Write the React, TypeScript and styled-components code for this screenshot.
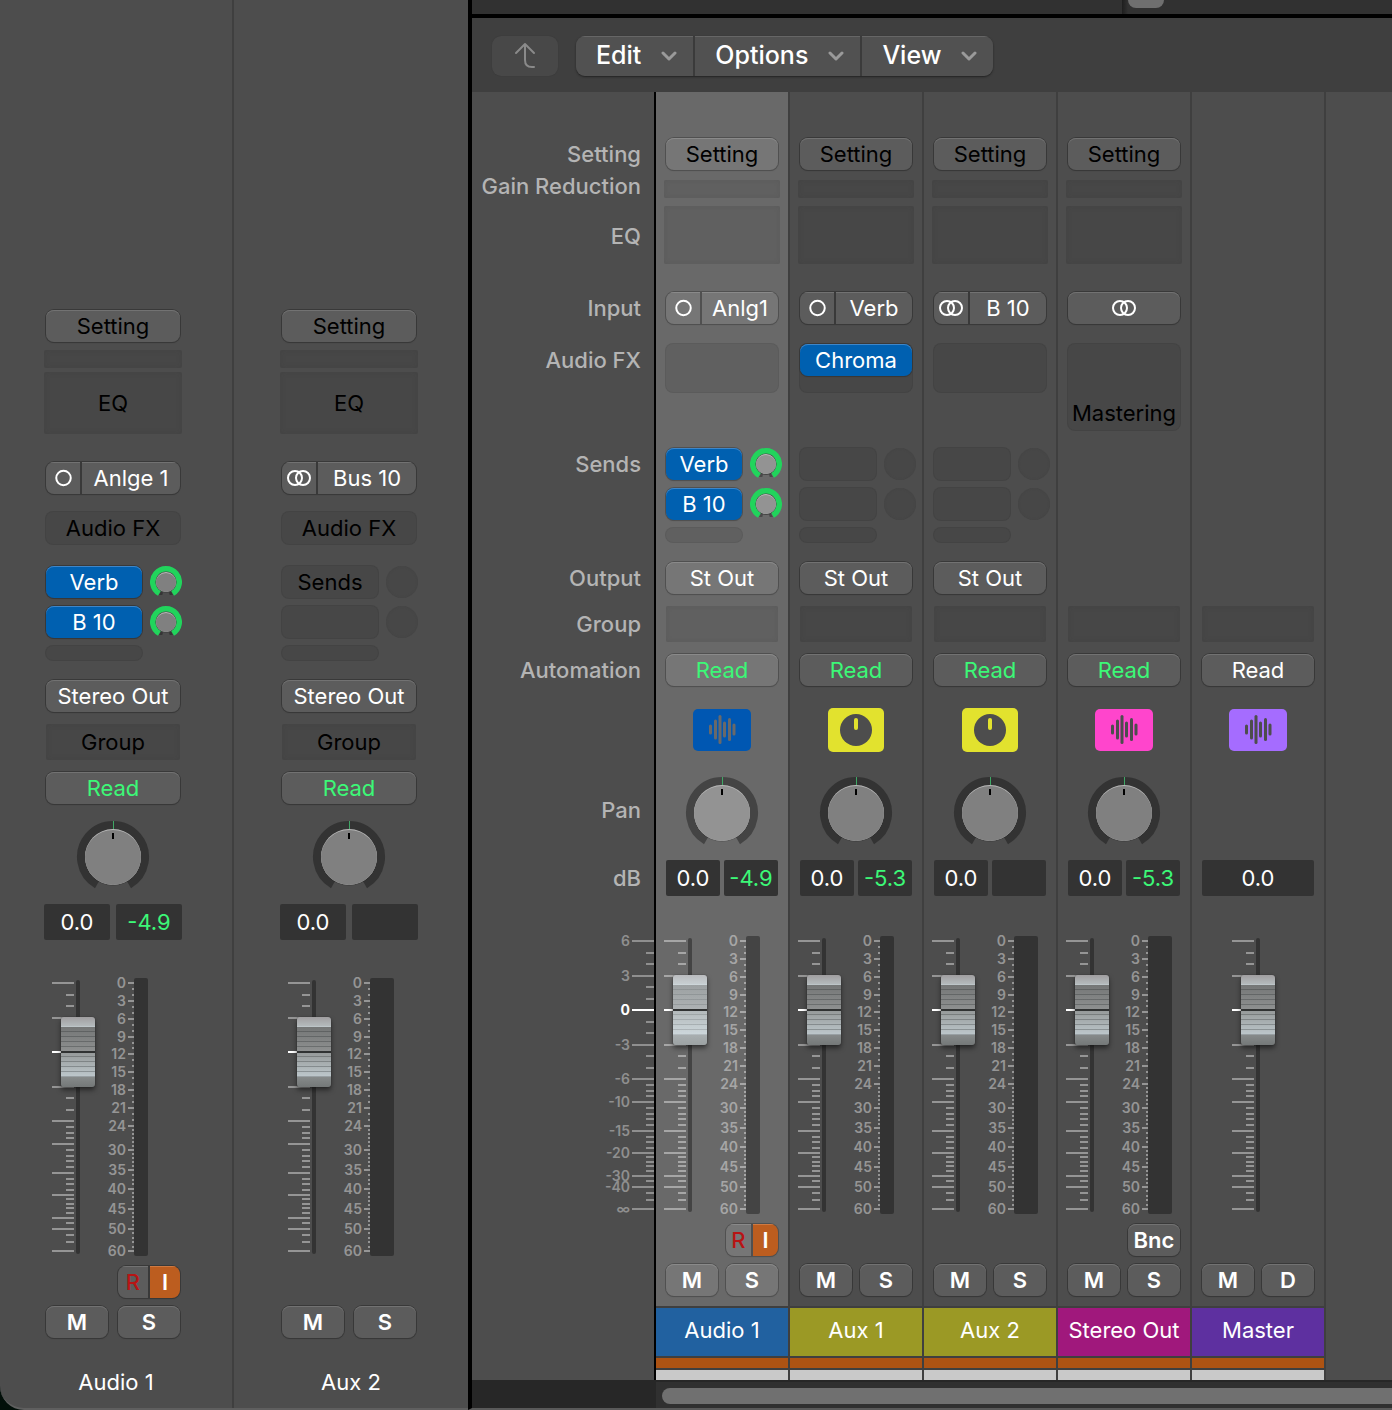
import React from "react";
import styled, { createGlobalStyle, css } from "styled-components";

const GlobalStyle = createGlobalStyle`
  *, *::before, *::after { box-sizing: border-box; }
  body { margin: 0; background: #020f09; }
  body, button, input { font-family: Inter, "Liberation Sans", sans-serif; }
`;

/* ---------- shared row tracks ---------- */

const mixerRows = css`
  grid-template-rows:
    [setting] 42px [gain] 26px [eq] 86px [input] 52px [fx] 104px [sends] 114px
    [output] 44px [group] 48px [automation] 54px [icon] 68px [pan] 84px [db] 76px
    [fader] 288px [rec] 40px [mute] 42px;
`;

const inspectorRows = css`
  grid-template-rows:
    [setting] 40px [gain] 22px [eq] 90px [input] 50px [fx] 54px [sends] 114px
    [output] 44px [group] 48px [automation] 48px [pan] 84px [db] 74px
    [fader] 288px [rec] 40px [mute] 60px;
`;

/* ---------- window ---------- */

const Window = styled.div`
  display: flex;
  min-height: 100vh;
  color: #fff;
  font-size: 22px;
`;

const Inspector = styled.section`
  display: flex;
  flex: none;
  width: 468px;
  background: #4d4d4d;
  border-bottom: 2px solid #5f5f5f;
  border-bottom-left-radius: 24px;
  overflow: hidden;
`;

const InspectorStrip = styled.article`
  --face: #5c5c5c;
  --edge: #727272;
  --shade: #393939;
  --slot: #474747;
  --slot-edge: #434343;
  --ring: #333;
  --knob: #808080;
  --tick: #959595;
  --ground: #4d4d4d;
  --gloss: rgba(255, 255, 255, 0);
  --pad-slot: 0;
  --pad-button: 0 2px;
  --pad-send: 0 0 0 2px;
  --pad-db: 0;
  --gap-db: 6px;
  --gap-mute: 10px;
  --inset: 44px;
  flex: 1;
  display: flex;
  flex-direction: column;
  justify-content: flex-end;
  padding-bottom: 10px;
  & + & {
    --inset: 46px;
    border-left: 2px solid #3f3f3f;
    flex: none;
    width: 236px;
  }
`;

const InspectorGrid = styled.div`
  display: grid;
  grid-template-columns: 138px;
  ${inspectorRows}
  padding-left: var(--inset);
`;

const InspectorName = styled.div`
  line-height: 32px;
  text-align: center;
`;

const Mixer = styled.main`
  flex: 1;
  min-width: 0;
  display: flex;
  flex-direction: column;
  border-left: 4px solid #000;
  border-bottom: 2px solid #5a5a5a;
  background: #4d4d4d;
  overflow: hidden;
`;

const UpperPane = styled.div`
  display: flex;
  justify-content: flex-end;
  height: 18px;
  background: #313131;
  border-bottom: 4px solid #000;
`;

const UpperScroll = styled.div`
  width: 270px;
  padding-left: 6px;
  background: linear-gradient(to right, #1e1e1e, #313131 6px);
`;

const UpperThumb = styled.div`
  width: 36px;
  height: 8px;
  border-radius: 0 0 8px 8px;
  background: #6f6f6f;
`;

const Toolbar = styled.header`
  display: flex;
  align-items: center;
  gap: 18px;
  height: 74px;
  padding: 2px 20px 0;
  background: #3f3f3f;
`;

const BackButton = styled.button`
  display: grid;
  place-items: center;
  width: 66px;
  height: 40px;
  padding: 0;
  border: 0;
  border-radius: 9px;
  background: #484848;
  box-shadow: 0 0 1px #353535;
  color: #8a8a8a;
`;

const MenuBar = styled.nav`
  display: flex;
  gap: 2px;
  height: 40px;
  border-radius: 9px;
  overflow: hidden;
  background: #3b3b3b;
  box-shadow: 0 1px 2px #222;
`;

const MenuButton = styled.button`
  display: flex;
  align-items: center;
  gap: 20px;
  padding: 0 16px 2px 20px;
  border: 0;
  background: #515151;
  box-shadow: inset 0 1px #666;
  color: #fff;
  font-size: 25px;
  font-weight: 500;
`;

const Body = styled.div`
  display: flex;
  flex: 1;
`;

const LabelColumn = styled.div`
  display: grid;
  ${mixerRows}
  align-content: start;
  flex: none;
  width: 184px;
  padding-top: 46px;
  border-right: 2px solid #000;
  color: #b4b4b4;
  --tick: #8f8f8f;
`;

const RowLabel = styled.div<{ $row: string; $line: number }>`
  grid-row: ${(p) => p.$row};
  padding-right: 13px;
  line-height: ${(p) => p.$line}px;
  font-weight: 500;
  text-align: right;
  white-space: nowrap;
`;

const ChannelStrip = styled.article<{ $selected?: boolean }>`
  --face: ${(p) => (p.$selected ? "#767676" : "#5c5c5c")};
  --edge: ${(p) => (p.$selected ? "#8a8a8a" : "#727272")};
  --shade: ${(p) => (p.$selected ? "#505050" : "#393939")};
  --slot: ${(p) => (p.$selected ? "#606060" : "#474747")};
  --slot-edge: ${(p) => (p.$selected ? "#5b5b5b" : "#434343")};
  --ring: ${(p) => (p.$selected ? "#444" : "#333")};
  --knob: ${(p) => (p.$selected ? "#939393" : "#808080")};
  --tick: ${(p) => (p.$selected ? "#a6a6a6" : "#959595")};
  --ground: ${(p) => (p.$selected ? "#696969" : "#4d4d4d")};
  --gloss: ${(p) => (p.$selected ? "rgba(240,250,255,0.32)" : "rgba(255,255,255,0)")};
  --pad-slot: 0 8px;
  --pad-button: 0 10px;
  --pad-send: 0 6px 0 10px;
  --pad-db: 0 10px;
  --gap-db: 4px;
  --gap-mute: 8px;
  flex: none;
  display: flex;
  flex-direction: column;
  width: 134px;
  border-right: 2px solid #3f3f3f;
  background: var(--ground);
`;

const ChannelGrid = styled.div`
  display: grid;
  grid-template-columns: minmax(0, 1fr);
  ${mixerRows}
  padding-top: 46px;
`;

const ChannelName = styled.div<{ $color: string }>`
  height: 50px;
  border-top: 2px solid #3f3f3f;
  background: ${(p) => p.$color};
  line-height: 44px;
  text-align: center;
  white-space: nowrap;
`;

const ColorBand = styled.div<{ $color: string }>`
  height: 12px;
  border-top: 2px solid #3f3f3f;
  background: ${(p) => p.$color};
`;

const ScrollFooter = styled.footer`
  display: flex;
  height: 28px;
  background: #272727;
`;

const ScrollTrack = styled.div`
  flex: 1;
  margin-left: 184px;
  padding: 6px 0 4px 6px;
  border-top: 2px solid #272727;
  background: #303030;
`;

const ScrollThumb = styled.div`
  height: 16px;
  border-radius: 8px 0 0 8px;
  background: #707070;
`;

/* ---------- strip parts ---------- */

type Pad = "slot" | "button" | "send" | "db";

const Cell = styled.div<{ $row: string; $pad?: Pad }>`
  grid-row: ${(p) => p.$row};
  padding: var(--pad-${(p) => p.$pad ?? "button"});
`;

const Slot = styled.div<{ $height: number; $round?: boolean; $bottom?: boolean }>`
  display: flex;
  align-items: ${(p) => (p.$bottom ? "flex-end" : "center")};
  justify-content: center;
  height: ${(p) => p.$height}px;
  padding-bottom: ${(p) => (p.$bottom ? 4 : 0)}px;
  border-radius: ${(p) => (p.$round ? 7 : 2)}px;
  background: var(--slot);
  box-shadow: ${(p) => (p.$round ? "0 0 0 1px var(--slot-edge)" : "inset 0 0 5px var(--slot-edge)")};
  color: #000;
  white-space: nowrap;
`;

const FxSlot = styled.div`
  height: 48px;
  border-radius: 7px;
  background: var(--slot);
  box-shadow: 0 0 0 1px var(--slot-edge);
`;

const Button = styled.button<{ $ink?: string; $fill?: string; $strong?: boolean }>`
  display: flex;
  align-items: center;
  justify-content: center;
  width: 100%;
  height: 32px;
  padding: 0;
  border: 0;
  border-radius: 8px;
  background: ${(p) => p.$fill ?? "var(--face)"};
  color: ${(p) => p.$ink ?? "#fff"};
  font-size: 22px;
  font-weight: ${(p) => (p.$strong ? 600 : 400)};
  white-space: nowrap;
  box-shadow: inset 0 1px ${(p) => (p.$fill ? "#3f86c8" : "var(--edge)")}, 0 1px 1px var(--shade), 0 0 0 1px var(--shade);
`;

const SplitButton = styled.div<{ $columns: string }>`
  display: grid;
  grid-template-columns: ${(p) => p.$columns};
  gap: 2px;
  height: 32px;
  border-radius: 8px;
  overflow: hidden;
  background: var(--shade);
  box-shadow: 0 0 0 1px var(--shade), 0 1px 1px var(--shade);
`;

const SplitPart = styled.button<{ $ink?: string; $fill?: string; $weight?: number }>`
  display: flex;
  align-items: center;
  justify-content: center;
  min-width: 0;
  padding: 0;
  border: 0;
  background: ${(p) => p.$fill ?? "var(--face)"};
  box-shadow: inset 0 1px ${(p) => (p.$fill ? "#cf7a42" : "var(--edge)")};
  color: ${(p) => p.$ink ?? "#fff"};
  font-size: 22px;
  font-weight: ${(p) => p.$weight ?? 400};
  white-space: nowrap;
`;

const SendGrid = styled.div`
  display: grid;
  grid-template-columns: minmax(0, 1fr) 32px;
  grid-template-rows: 32px 32px 14px;
  gap: 8px;
`;

const EmptyKnob = styled.div`
  border-radius: 50%;
  background: var(--slot);
  box-shadow: inset 0 0 2px var(--slot-edge);
`;

const KnobFrame = styled.div<{ $size: number }>`
  display: grid;
  grid-template-columns: ${(p) => p.$size}px;
  grid-template-rows: ${(p) => p.$size}px;
  justify-content: center;
  & > * { grid-area: 1 / 1; }
`;

const KnobInput = styled.input`
  width: 100%;
  height: 100%;
  min-width: 0;
  margin: 0;
  opacity: 0;
`;

const DbGrid = styled.div<{ $single?: boolean }>`
  display: grid;
  grid-template-columns: ${(p) => (p.$single ? "1fr" : "1fr 1fr")};
  gap: var(--gap-db);
`;

const readout = css`
  width: 100%;
  min-width: 0;
  height: 36px;
  padding: 0;
  border: 0;
  border-radius: 2px;
  background: #333;
  font-size: 22px;
  line-height: 36px;
  text-align: center;
`;

const VolumeField = styled.input`
  ${readout}
  color: #fff;
`;

const PeakReadout = styled.output`
  ${readout}
  color: #3cf877;
`;

const IconTile = styled.div`
  display: grid;
  place-items: center;
  height: 44px;
`;

const FaderRow = styled.div<{ $centered?: boolean }>`
  grid-row: fader;
  display: flex;
  justify-content: ${(p) => (p.$centered ? "center" : "flex-start")};
  padding: 0 8px;
`;

const FaderFrame = styled.div`
  display: grid;
  width: 52px;
  height: 278px;
  & > * { grid-area: 1 / 1; }
`;

const capGradient = css`
  background:
    linear-gradient(transparent 34px, #303232 34px, #303232 36px, transparent 36px),
    linear-gradient(var(--gloss), var(--gloss)),
    repeating-linear-gradient(transparent 0, transparent 4px, rgba(30, 34, 36, 0.28) 4px, rgba(30, 34, 36, 0.28) 5px) 0 10px / 100% 50px no-repeat,
    linear-gradient(#a09ea0 0, #b4babc 9px, #c6d0d4 10px, #747676 10px, #8e9090 34px, #969a9a 36px, #bcc6ca 59px, #d2dade 60px, #868a8a 60px, #747878 70px);
`;

const FaderInput = styled.input`
  appearance: none;
  writing-mode: vertical-lr;
  direction: rtl;
  justify-self: center;
  align-self: center;
  width: 34px;
  height: 274px;
  margin: 0;
  background: transparent;
  &::-webkit-slider-thumb {
    appearance: none;
    width: 34px;
    height: 70px;
    border-radius: 3px;
    ${capGradient}
    box-shadow: 0 0 1px #222, 0 3px 5px rgba(0, 0, 0, 0.5);
  }
`;

const MeterBar = styled.div<{ $stereo?: boolean }>`
  width: ${(p) => (p.$stereo ? 24 : 14)}px;
  height: 278px;
  border-radius: 2px;
  background: var(--ring);
`;

const MuteRow = styled.div`
  display: grid;
  grid-template-columns: 1fr 1fr;
  gap: var(--gap-mute);
`;

const RightHalf = styled.div`
  grid-column: 2;
`;

/* ---------- drawings ---------- */

const MAJOR: [string, number][] = [
  ["6", 5], ["3", 40], ["0", 74], ["-3", 109], ["-6", 143], ["-10", 166],
  ["-15", 195], ["-20", 217], ["-30", 240], ["-40", 251], ["∞", 273],
];
const MINOR = [
  17, 28, 51, 63, 86, 97, 120, 132, 149, 155, 160, 172, 178, 183, 189,
  201, 206, 212, 221, 226, 230, 235, 245, 257, 264,
];
const METER: [number, number][] = [
  [0, 5], [3, 23], [6, 41], [9, 59], [12, 76], [15, 94], [18, 112], [21, 130],
  [24, 148], [30, 172], [35, 192], [40, 211], [45, 231], [50, 251], [60, 273],
];

const ScaleText = styled.text<{ $bright?: boolean }>`
  fill: ${(p) => (p.$bright ? "#fff" : "var(--tick)")};
  font-size: 14px;
  font-weight: ${(p) => (p.$bright ? 700 : 600)};
  text-anchor: end;
`;

function Ticks({ right }: { right: number }) {
  return (
    <g>
      {MAJOR.map(([label, y]) => (
        <rect key={label} x={right - 22} y={y - 1} width={22} height={2} fill={label === "0" ? "#fff" : "var(--tick)"} />
      ))}
      {MINOR.map((y) => (
        <rect key={y} x={right - 8} y={y - 1} width={8} height={2} fill="var(--tick)" />
      ))}
    </g>
  );
}

const LabelScaleSvg = styled.svg`
  grid-row: fader;
  display: block;
  overflow: visible;
`;

function LabelScale() {
  return (
    <LabelScaleSvg width={182} height={278}>
      <Ticks right={182} />
      {MAJOR.map(([label, y]) => (
        <ScaleText key={label} x={158} y={y + 5} $bright={label === "0"}>{label}</ScaleText>
      ))}
    </LabelScaleSvg>
  );
}

function Fader({ name }: { name: string }) {
  return (
    <FaderFrame>
      <svg width={52} height={278} aria-hidden="true">
        <Ticks right={22} />
        <rect x={24} y={2} width={4} height={274} rx={2} fill="var(--ring)" />
      </svg>
      <FaderInput type="range" min={0} max={204} step={1} defaultValue={167} aria-label={`${name} volume`} />
    </FaderFrame>
  );
}

function MeterScale() {
  const minors = METER.slice(0, -1).flatMap(([db, y], i) => {
    const [nextDb, nextY] = METER[i + 1];
    const steps = Math.min(nextDb - db, Math.floor((nextY - y) / 4));
    const count = db < 24 ? 3 : steps;
    return Array.from({ length: count - 1 }, (_, k) => Math.round(y + ((nextY - y) * (k + 1)) / count));
  });
  return (
    <svg width={30} height={278} aria-hidden="true" overflow="visible">
      {METER.map(([db, y]) => (
        <g key={db}>
          <ScaleText x={22} y={y + 5}>{db}</ScaleText>
          <rect x={24} y={y - 1} width={6} height={2} fill="var(--tick)" />
        </g>
      ))}
      {minors.map((y) => (
        <rect key={y} x={28} y={y - 1} width={2} height={2} fill="var(--tick)" />
      ))}
    </svg>
  );
}

function arc(c: number, r: number) {
  const dx = r * Math.sin(Math.PI / 6);
  const dy = r * Math.cos(Math.PI / 6);
  return `M${c - dx} ${c + dy}A${r} ${r} 0 1 1 ${c + dx} ${c + dy}`;
}

function PanKnob({ name }: { name: string }) {
  return (
    <KnobFrame $size={74}>
      <svg width={74} height={74} aria-hidden="true">
        <path d={arc(37, 32)} fill="none" stroke="var(--ring)" strokeWidth={8} />
        <rect x={37} y={1} width={1} height={8} fill="#3fa765" />
        <circle cx={37} cy={38} r={28} fill="#000" opacity={0.12} />
        <circle cx={37} cy={37} r={28} fill="#b9b9b9" />
        <path d="M9 37A28 28 0 0 0 65 37A28 27 0 0 0 9 37Z" fill="var(--knob)" />
        <rect x={36} y={13} width={2} height={6} fill="#000" />
      </svg>
      <KnobInput type="range" min={-64} max={63} defaultValue={0} aria-label={`${name} pan`} />
    </KnobFrame>
  );
}

function SendKnob({ name }: { name: string }) {
  return (
    <KnobFrame $size={32}>
      <svg width={32} height={32} aria-hidden="true">
        <path d="M16 16L9 29L23 29Z" fill="#000" opacity={0.3} />
        <path d="M16 16L12 30L20 30Z" fill="var(--ground)" />
        <circle cx={16} cy={16} r={11} fill="#444" />
        <path d={arc(16, 13.25)} fill="none" stroke="#21d45c" strokeWidth={5.5} />
        <circle cx={16} cy={16} r={10} fill="#bcbcbc" />
        <path d="M6 16A10 10 0 0 0 26 16A10 9 0 0 0 6 16Z" fill="var(--knob)" />
      </svg>
      <KnobInput type="range" min={0} max={127} defaultValue={127} aria-label={`${name} level`} />
    </KnobFrame>
  );
}

function FormatIcon({ stereo }: { stereo?: boolean }) {
  return stereo ? (
    <svg width={26} height={18} fill="none" stroke="#fff" strokeWidth={2} role="img" aria-label="Stereo">
      <circle cx={9} cy={9} r={7} />
      <circle cx={17} cy={9} r={7} />
    </svg>
  ) : (
    <svg width={18} height={18} fill="none" stroke="#fff" strokeWidth={2} role="img" aria-label="Mono">
      <circle cx={9.5} cy={9} r={7.25} />
    </svg>
  );
}

const WAVE: [number, number][] = [[17.5, 10], [22.5, 20], [27, 29], [31.5, 16], [36.5, 23], [41, 12]];

function ChannelIcon({ kind, color }: { kind: "wave" | "dial"; color: string }) {
  return kind === "wave" ? (
    <svg width={58} height={42} role="img" aria-label="Audio channel">
      <rect width={58} height={42} rx={5} fill={color} />
      {WAVE.map(([x, h]) => (
        <rect key={x} x={x - 1.5} y={20.5 - h / 2} width={3} height={h} rx={1.5} fill="var(--ground)" />
      ))}
    </svg>
  ) : (
    <svg width={56} height={44} role="img" aria-label="Aux channel">
      <rect width={56} height={44} rx={5} fill={color} />
      <circle cx={28} cy={22} r={16} fill="#4d4d4d" />
      <rect x={26} y={10} width={4} height={12} rx={2} fill={color} />
    </svg>
  );
}

function Chevron() {
  return (
    <svg width={16} height={12} fill="none" stroke="#9a9a9a" strokeWidth={3} strokeLinecap="round" strokeLinejoin="round" aria-hidden="true">
      <path d="M2 4L8 10L14 4" />
    </svg>
  );
}

/* ---------- channels ---------- */

const GREEN = "#3cf877";
const BLUE = "#0060b0";

function Input({ stereo, source }: { stereo?: boolean; source: string }) {
  return (
    <SplitButton $columns="34px minmax(0, 1fr)">
      <SplitPart><FormatIcon stereo={stereo} /></SplitPart>
      <SplitPart>{source}</SplitPart>
    </SplitButton>
  );
}

function Sends({ sends, placeholder }: { sends: string[]; placeholder?: string }) {
  return (
    <SendGrid>
      {[0, 1].map((i) => (
        <React.Fragment key={i}>
          {sends[i] ? <Button $fill={BLUE}>{sends[i]}</Button> : <Slot $height={32} $round>{i === 0 && placeholder}</Slot>}
          {sends[i] ? <SendKnob name={sends[i]} /> : <EmptyKnob />}
        </React.Fragment>
      ))}
      <Slot $height={14} $round />
    </SendGrid>
  );
}

function RecordInput() {
  return (
    <SplitButton $columns="1fr 1fr">
      <SplitPart $ink="#b81414" $weight={500}>R</SplitPart>
      <SplitPart $fill="#bc5d1f" $weight={600}>I</SplitPart>
    </SplitButton>
  );
}

interface Channel {
  name: string;
  color: string;
  icon: "wave" | "dial";
  iconColor: string;
  selected?: boolean;
  master?: boolean;
  stereo?: boolean;
  source?: string;
  plugin?: string;
  sends?: string[];
  output?: string;
  peak?: string;
  record?: boolean;
  bounce?: boolean;
}

const CHANNELS: Channel[] = [
  { name: "Audio 1", color: "#2161a0", icon: "wave", iconColor: "#0057b2", selected: true, source: "Anlg1", sends: ["Verb", "B 10"], output: "St Out", peak: "-4.9", record: true },
  { name: "Aux 1", color: "#9b9925", icon: "dial", iconColor: "#e2e22e", source: "Verb", plugin: "Chroma", sends: [], output: "St Out", peak: "-5.3" },
  { name: "Aux 2", color: "#9b9925", icon: "dial", iconColor: "#e2e22e", stereo: true, source: "B 10", sends: [], output: "St Out", peak: "" },
  { name: "Stereo Out", color: "#a0187c", icon: "wave", iconColor: "#ff45cc", stereo: true, peak: "-5.3", bounce: true },
  { name: "Master", color: "#5e30a0", icon: "wave", iconColor: "#a56cff", master: true },
];

const LABELS: [string, string, number][] = [
  ["setting", "Setting", 32],
  ["gain", "Gain Reduction", 12],
  ["eq", "EQ", 60],
  ["input", "Input", 32],
  ["fx", "Audio FX", 32],
  ["sends", "Sends", 32],
  ["output", "Output", 32],
  ["group", "Group", 36],
  ["automation", "Automation", 32],
  ["pan", "Pan", 68],
  ["db", "dB", 36],
];

function MixerChannel({ ch }: { ch: Channel }) {
  return (
    <ChannelStrip $selected={ch.selected} aria-label={ch.name}>
      <ChannelGrid>
        {!ch.master && (
          <>
            <Cell $row="setting"><Button $ink="#000">Setting</Button></Cell>
            <Cell $row="gain" $pad="slot"><Slot $height={18} /></Cell>
            <Cell $row="eq" $pad="slot"><Slot $height={58} /></Cell>
            <Cell $row="input">
              {ch.source ? <Input stereo={ch.stereo} source={ch.source} /> : <Button><FormatIcon stereo /></Button>}
            </Cell>
            <Cell $row="fx">
              {ch.bounce ? (
                <Slot $height={86} $round $bottom>Mastering</Slot>
              ) : (
                <FxSlot>{ch.plugin && <Button $fill={BLUE}>{ch.plugin}</Button>}</FxSlot>
              )}
            </Cell>
            {ch.sends && <Cell $row="sends" $pad="send"><Sends sends={ch.sends} /></Cell>}
            {ch.output && <Cell $row="output"><Button>{ch.output}</Button></Cell>}
            <Cell $row="pan"><PanKnob name={ch.name} /></Cell>
          </>
        )}
        <Cell $row="group"><Slot $height={36} /></Cell>
        <Cell $row="automation"><Button $ink={ch.master ? "#fff" : GREEN}>Read</Button></Cell>
        <Cell $row="icon"><IconTile><ChannelIcon kind={ch.icon} color={ch.iconColor} /></IconTile></Cell>
        <Cell $row="db" $pad="db">
          <DbGrid $single={ch.master}>
            <VolumeField defaultValue="0.0" aria-label={`${ch.name} level in dB`} />
            {!ch.master && <PeakReadout>{ch.peak}</PeakReadout>}
          </DbGrid>
        </Cell>
        <FaderRow $centered={ch.master}>
          <Fader name={ch.name} />
          {!ch.master && <><MeterScale /><MeterBar $stereo={ch.stereo} /></>}
        </FaderRow>
        {(ch.record || ch.bounce) && (
          <Cell $row="rec">
            <MuteRow><RightHalf>{ch.record ? <RecordInput /> : <Button $strong>Bnc</Button>}</RightHalf></MuteRow>
          </Cell>
        )}
        <Cell $row="mute">
          <MuteRow>
            <Button $strong>M</Button>
            <Button $strong>{ch.master ? "D" : "S"}</Button>
          </MuteRow>
        </Cell>
      </ChannelGrid>
      <ChannelName $color={ch.color}>{ch.name}</ChannelName>
      <ColorBand $color="#ad5313" />
      <ColorBand $color="#c9c9c9" />
    </ChannelStrip>
  );
}

interface InspectorChannelProps {
  name: string;
  source: string;
  stereo?: boolean;
  sends: string[];
  peak: string;
  record?: boolean;
}

function InspectorChannel({ name, source, stereo, sends, peak, record }: InspectorChannelProps) {
  return (
    <InspectorStrip aria-label={name}>
      <InspectorGrid>
        <Cell $row="setting"><Button $ink="#000">Setting</Button></Cell>
        <Cell $row="gain" $pad="slot"><Slot $height={18} /></Cell>
        <Cell $row="eq" $pad="slot"><Slot $height={62}>EQ</Slot></Cell>
        <Cell $row="input"><Input stereo={stereo} source={source} /></Cell>
        <Cell $row="fx"><Slot $height={32} $round>Audio FX</Slot></Cell>
        <Cell $row="sends" $pad="send"><Sends sends={sends} placeholder="Sends" /></Cell>
        <Cell $row="output"><Button>Stereo Out</Button></Cell>
        <Cell $row="group"><Slot $height={36}>Group</Slot></Cell>
        <Cell $row="automation"><Button $ink={GREEN}>Read</Button></Cell>
        <Cell $row="pan"><PanKnob name={name} /></Cell>
        <Cell $row="db" $pad="db">
          <DbGrid>
            <VolumeField defaultValue="0.0" aria-label={`${name} level in dB`} />
            <PeakReadout>{peak}</PeakReadout>
          </DbGrid>
        </Cell>
        <FaderRow>
          <Fader name={name} />
          <MeterScale />
          <MeterBar $stereo={stereo} />
        </FaderRow>
        {record && <Cell $row="rec"><MuteRow><RightHalf><RecordInput /></RightHalf></MuteRow></Cell>}
        <Cell $row="mute">
          <MuteRow>
            <Button $strong>M</Button>
            <Button $strong>S</Button>
          </MuteRow>
        </Cell>
      </InspectorGrid>
      <InspectorName>{name}</InspectorName>
    </InspectorStrip>
  );
}

export default function App() {
  return (
    <>
      <GlobalStyle />
      <Window>
        <Inspector>
          <InspectorChannel name="Audio 1" source="Anlge 1" sends={["Verb", "B 10"]} peak="-4.9" record />
          <InspectorChannel name="Aux 2" source="Bus 10" stereo sends={[]} peak="" />
        </Inspector>
        <Mixer>
          <UpperPane><UpperScroll><UpperThumb /></UpperScroll></UpperPane>
          <Toolbar>
            <BackButton aria-label="Up one level">
              <svg width={22} height={28} fill="none" stroke="currentColor" strokeWidth={2} strokeLinecap="round" strokeLinejoin="round" aria-hidden="true">
                <path d="M2 11L11 2L20 11M11 2V18Q11 25 18 25H20" />
              </svg>
            </BackButton>
            <MenuBar>
              {["Edit", "Options", "View"].map((item) => (
                <MenuButton key={item}>{item}<Chevron /></MenuButton>
              ))}
            </MenuBar>
          </Toolbar>
          <Body>
            <LabelColumn>
              {LABELS.map(([row, text, line]) => (
                <RowLabel key={row} $row={row} $line={line}>{text}</RowLabel>
              ))}
              <LabelScale />
            </LabelColumn>
            {CHANNELS.map((ch) => <MixerChannel key={ch.name} ch={ch} />)}
          </Body>
          <ScrollFooter><ScrollTrack><ScrollThumb /></ScrollTrack></ScrollFooter>
        </Mixer>
      </Window>
    </>
  );
}
